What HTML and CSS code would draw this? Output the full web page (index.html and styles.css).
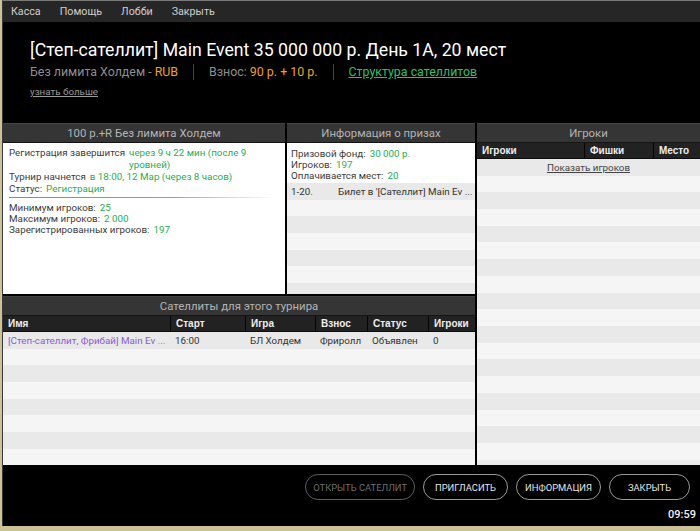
FILE: index.html
```html
<!DOCTYPE html>
<html lang="ru">
<head>
<meta charset="utf-8">
<title>Турнир</title>
<link rel="stylesheet" href="styles.css">
</head>
<body>
<div class="window">
  <nav class="menubar">
    <span class="menu-item">Касса</span>
    <span class="menu-item">Помощь</span>
    <span class="menu-item">Лобби</span>
    <span class="menu-item">Закрыть</span>
  </nav>
  <header class="hero">
    <h1 class="title">[Степ-сателлит] Main Event 35 000 000 р. День 1А, 20 мест</h1>
    <div class="meta">
      <span>Без лимита Холдем - <span class="orange">RUB</span></span>
      <span class="sep"></span>
      <span>Взнос: <span class="orange">90 р. + 10 р.</span></span>
      <span class="sep"></span>
      <a class="green-link" href="#">Структура сателлитов</a>
    </div>
    <a class="more" href="#">узнать больше</a>
  </header>

  <main class="panels">
    <section class="panel p-info">
      <div class="panel-head">100 р.+R Без лимита Холдем</div>
      <div class="panel-body info-body">
        <div class="kv"><span class="k">Регистрация завершится</span><span class="v">через 9 ч 22 мин (после 9 уровней)</span></div>
        <div class="kv"><span class="k">Турнир начнется</span><span class="v">в 18:00, 12 Мар (через 8 часов)</span></div>
        <div class="kv"><span class="k">Статус:</span><span class="v">Регистрация</span></div>
        <div class="divider"></div>
        <div class="kv tight"><span class="k">Минимум игроков:</span><span class="v">25</span></div>
        <div class="kv tight"><span class="k">Максимум игроков:</span><span class="v">2 000</span></div>
        <div class="kv tight"><span class="k">Зарегистрированных игроков:</span><span class="v">197</span></div>
      </div>
    </section>

    <section class="panel p-prize">
      <div class="panel-head">Информация о призах</div>
      <div class="prize-summary">
        <div class="kv tight"><span class="k">Призовой фонд:</span><span class="v">30 000 р.</span></div>
        <div class="kv tight"><span class="k">Игроков:</span><span class="v">197</span></div>
        <div class="kv tight"><span class="k">Оплачивается мест:</span><span class="v">20</span></div>
      </div>
      <div class="rows">
        <div class="prize-row"><span class="place">1-20.</span><span class="ellip">Билет в '[Сателлит] Main Ev ...</span></div>
      </div>
    </section>

    <section class="panel p-players">
      <div class="panel-head">Игроки</div>
      <div class="cols cols-players">
        <span>Игроки</span><span>Фишки</span><span>Место</span>
      </div>
      <div class="rows">
        <div class="show-row"><a class="show-link" href="#">Показать игроков</a></div>
      </div>
    </section>

    <section class="panel p-sat">
      <div class="panel-head">Сателлиты для этого турнира</div>
      <div class="cols cols-sat">
        <span>Имя</span><span>Старт</span><span>Игра</span><span>Взнос</span><span>Статус</span><span>Игроки</span>
      </div>
      <div class="rows">
        <div class="sat-row cols-sat">
          <span class="purple ellip">[Степ-сателлит, Фрибай] Main Ev ...</span><span>16:00</span><span>БЛ Холдем</span><span>Фриролл</span><span>Объявлен</span><span>0</span>
        </div>
      </div>
    </section>
  </main>

  <footer class="footer">
    <div class="buttons">
      <button class="btn btn-disabled">ОТКРЫТЬ САТЕЛЛИТ</button>
      <button class="btn">ПРИГЛАСИТЬ</button>
      <button class="btn">ИНФОРМАЦИЯ</button>
      <button class="btn btn-close">ЗАКРЫТЬ</button>
    </div>
    <div class="clock">09:59</div>
  </footer>
</div>
</body>
</html>
```
FILE: styles.css
```css
* { box-sizing: border-box; }

html, body {
  margin: 0;
  padding: 0;
}

body {
  background: #cdc197;
  width: 700px;
  height: 531px;
  overflow: hidden;
  font-family: Roboto, "Liberation Sans", sans-serif;
}

.window {
  margin-left: 2px;
  width: 698px;
  height: 526px;
  background: #000;
  border-left: 1px solid #3a3a3a;
  border-top: 1px solid #7a7a7a;
  display: flex;
  flex-direction: column;
}

/* menu */
.menubar {
  height: 21px;
  flex: none;
  background: #262626;
  display: flex;
  align-items: center;
  padding-left: 8px;
  font-size: 10.7px;
  color: #cfcfcf;
}
.menu-item { margin-right: 19px; }

/* hero */
.hero {
  height: 101px;
  flex: none;
  padding: 17px 0 0 27px;
  color: #fff;
}
.title {
  margin: 0;
  font-size: 17.7px;
  font-weight: 400;
  line-height: 22px;
}
.meta {
  margin-top: 3px;
  display: flex;
  align-items: center;
  font-size: 12.4px;
  line-height: 16px;
  color: #8f8f8f;
}
.orange { color: #f2a11f; }
.sep {
  display: inline-block;
  width: 1px;
  height: 16px;
  background: #444;
  margin: 0 15px;
}
.green-link {
  color: #2dbf6a;
  text-decoration: underline;
}
.more {
  display: inline-block;
  margin-top: 6px;
  font-size: 9.8px;
  line-height: 12px;
  color: #9a9a9a;
  text-decoration: underline;
}

/* panels */
.panels {
  height: 342px;
  flex: none;
  display: grid;
  grid-template-columns: 282px 188px 223px;
  grid-template-rows: 171px 169px;
  column-gap: 2px;
  row-gap: 2px;
}
.panel {
  display: flex;
  flex-direction: column;
  overflow: hidden;
  background: #fff;
}
.p-players { grid-column: 3; grid-row: 1 / span 2; }
.p-sat { grid-column: 1 / span 2; grid-row: 2; }

.panel-head {
  height: 20px;
  flex: none;
  background: #353535;
  border-top: 1px solid #444;
  border-bottom: 1px solid #141414;
  color: #b4b4b4;
  font-size: 11.4px;
  line-height: 18px;
  text-align: center;
}

.kv {
  display: flex;
  font-size: 9.8px;
  line-height: 12px;
  color: #3c3c3c;
}
.kv.tight { line-height: 11px; }
.k { flex: none; margin-right: 4px; }
.v { color: #1fae56; }

.info-body {
  flex: 1;
  padding: 4px 10px 0 6px;
}
.divider {
  height: 1px;
  margin: 2px 0 4px 0;
  background: linear-gradient(to right, #8a8a8a 0%, #9a9a9a 60%, rgba(255,255,255,0) 100%);
}

.prize-summary {
  padding: 5px 4px 2px 4px;
}

.rows {
  flex: 1;
  background: repeating-linear-gradient(to bottom, #e9e9e9 0, #e9e9e9 16.7px, #f5f5f5 16.7px, #f5f5f5 33.4px);
}

.prize-row {
  height: 16.7px;
  display: flex;
  align-items: center;
  padding-left: 4px;
  font-size: 9.8px;
  color: #333;
}
.place { width: 47px; flex: none; }
.ellip { white-space: nowrap; overflow: hidden; }

.cols {
  display: grid;
}
.cols-players { grid-template-columns: 107px 69px 47px; }
.cols-sat { grid-template-columns: 167px 75px 70px 52px 61px 47px; }

.panel-head + .cols {
  flex: none;
  height: 16px;
  background: #222;
  border-bottom: 1px solid #0c0c0c;
  font-family: "Liberation Sans", Arial, sans-serif;
  font-weight: 700;
  font-size: 10px;
  line-height: 15px;
  color: #eee;
}
.panel-head + .cols span {
  padding-left: 5px;
  border-left: 1px solid #050505;
}
.panel-head + .cols span:first-child { border-left: none; }

.show-row {
  height: 17px;
  display: flex;
  align-items: center;
  justify-content: center;
}
.show-link {
  font-size: 9.8px;
  color: #444;
  text-decoration: underline;
}

.sat-row {
  height: 16.7px;
  display: grid;
  align-items: center;
  font-size: 9.8px;
  color: #333;
}
.sat-row span { padding-left: 5px; }
.purple { color: #8a5bd9; }

/* footer */
.footer {
  flex: 1;
  display: flex;
  flex-direction: column;
  align-items: flex-end;
}
.buttons {
  display: flex;
  gap: 8px;
  padding: 9px 10px 0 0;
}
.btn {
  height: 26px;
  min-width: 85px;
  padding: 0 7px;
  border: 1px solid #9a9a9a;
  border-radius: 13px;
  background: #000;
  color: #e6e6e6;
  font-family: Roboto, "Liberation Sans", sans-serif;
  font-size: 9.4px;
}
.btn-disabled {
  color: #6e6e6e;
  border-color: #5e5e5e;
}
.btn-close { min-width: 81px; }
.clock {
  margin-top: 8px;
  padding-right: 4px;
  font-size: 11px;
  font-weight: 500;
  color: #f2f2f2;
}
```
